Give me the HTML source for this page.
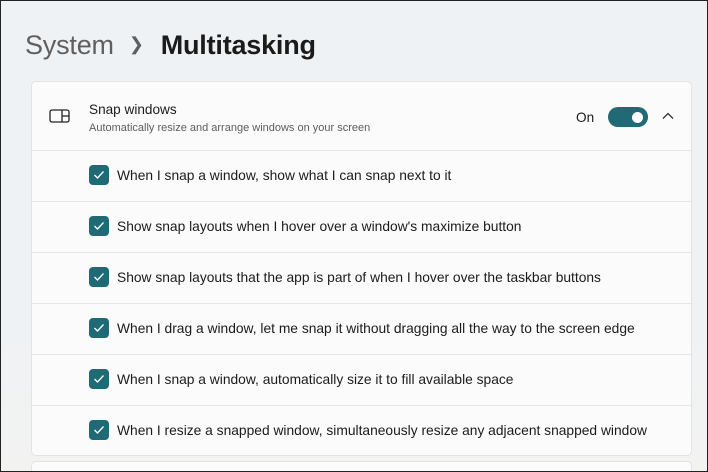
<!DOCTYPE html>
<html><head><style>
*{margin:0;padding:0;box-sizing:border-box}
html,body{width:708px;height:472px;overflow:hidden;font-family:"Segoe UI","Liberation Sans",sans-serif;}
.win{position:absolute;left:0;top:0;width:708px;height:472px;overflow:hidden;border:1px solid #222;background:linear-gradient(180deg,#eef2f5 0%,#eff2f4 70%,#f2f2f1 100%);}
.title{position:absolute;left:24px;top:29px;font-size:27px;color:#1b1b1b;font-weight:600;white-space:nowrap;letter-spacing:-0.2px}
.title .s{color:#5f5f5f;font-weight:500}
.title .c{color:#5f5f5f;font-weight:400;font-size:18px;margin:0 17px 0 15px;position:relative;top:-4px}
.card{position:absolute;left:30px;top:80px;width:661px;height:375px;background:#fbfbfb;border:1px solid #e3e3e3;border-radius:5px}
.card2{position:absolute;left:30px;top:460px;width:661px;height:30px;background:#fbfbfb;border:1px solid #e3e3e3;border-radius:5px}
.row{position:absolute;left:0;width:659px;height:51px;border-top:1px solid #e6e6e6}
.cb{position:absolute;left:57px;top:14px;width:20px;height:20px;border-radius:4px;background:#1f6a74}
.cb svg{position:absolute;left:4px;top:5px}
.row span{position:absolute;left:85px;top:17px;font-size:13.8px;color:#1b1b1b;white-space:nowrap}
.h1{position:absolute;left:57px;top:20px;font-size:13.6px;color:#1b1b1b}
.h2{position:absolute;left:57px;top:40px;font-size:11px;color:#5d5d5d;white-space:nowrap}
.on{position:absolute;left:544px;top:28px;font-size:13.6px;color:#1b1b1b}
.tg{position:absolute;left:576px;top:25px;width:40px;height:20px;border-radius:10px;background:#1f6a74}
.tg i{position:absolute;right:5px;top:5px;width:11px;height:11px;border-radius:50%;background:#fff}
</style></head><body><div class="win">
<div class="title"><span class="s">System</span><span class="c">&#x276F;</span>Multitasking</div>
<div class="card">
<svg style="position:absolute;left:17px;top:27px" width="22" height="14" viewBox="0 0 22 14"><rect x="1" y="1" width="19" height="12" rx="2" fill="none" stroke="#222" stroke-width="1.3"/><line x1="13" y1="1" x2="13" y2="13" stroke="#222" stroke-width="1.3"/><line x1="13" y1="7" x2="20" y2="7" stroke="#222" stroke-width="1.3"/></svg>
<div class="h1">Snap windows</div>
<div class="h2">Automatically resize and arrange windows on your screen</div>
<div class="on">On</div>
<div class="tg"><i></i></div>
<svg style="position:absolute;left:630px;top:30px" width="12" height="8" viewBox="0 0 12 8"><path d="M1 6.5 L6 1.5 L11 6.5" fill="none" stroke="#333" stroke-width="1.3"/></svg>
<div class="row" style="top:68px"><div class="cb"><svg width="12" height="10" viewBox="0 0 12 10"><path d="M1.5 5 L4.5 8 L10.5 1.5" fill="none" stroke="#fff" stroke-width="1.3"/></svg></div><span>When I snap a window, show what I can snap next to it</span></div>
<div class="row" style="top:119px"><div class="cb"><svg width="12" height="10" viewBox="0 0 12 10"><path d="M1.5 5 L4.5 8 L10.5 1.5" fill="none" stroke="#fff" stroke-width="1.3"/></svg></div><span>Show snap layouts when I hover over a window's maximize button</span></div>
<div class="row" style="top:170px"><div class="cb"><svg width="12" height="10" viewBox="0 0 12 10"><path d="M1.5 5 L4.5 8 L10.5 1.5" fill="none" stroke="#fff" stroke-width="1.3"/></svg></div><span>Show snap layouts that the app is part of when I hover over the taskbar buttons</span></div>
<div class="row" style="top:221px"><div class="cb"><svg width="12" height="10" viewBox="0 0 12 10"><path d="M1.5 5 L4.5 8 L10.5 1.5" fill="none" stroke="#fff" stroke-width="1.3"/></svg></div><span>When I drag a window, let me snap it without dragging all the way to the screen edge</span></div>
<div class="row" style="top:272px"><div class="cb"><svg width="12" height="10" viewBox="0 0 12 10"><path d="M1.5 5 L4.5 8 L10.5 1.5" fill="none" stroke="#fff" stroke-width="1.3"/></svg></div><span>When I snap a window, automatically size it to fill available space</span></div>
<div class="row" style="top:323px"><div class="cb"><svg width="12" height="10" viewBox="0 0 12 10"><path d="M1.5 5 L4.5 8 L10.5 1.5" fill="none" stroke="#fff" stroke-width="1.3"/></svg></div><span>When I resize a snapped window, simultaneously resize any adjacent snapped window</span></div>
</div>
<div class="card2"></div>
</div></body></html>
